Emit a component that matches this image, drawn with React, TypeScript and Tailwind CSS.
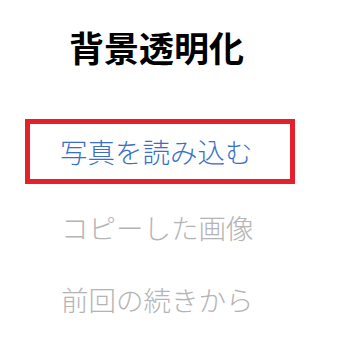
import React from "react";

export default function App() {
  const jp = { fontFamily: '"Noto Sans CJK JP", "Noto Sans", sans-serif' };
  return (
    <div className="w-[340px] h-[361px] bg-white overflow-hidden" style={jp}>
      <div className="pt-[23px] pl-[69px]">
        <h1 className="text-[35px] leading-[48px] font-bold text-black">背景透明化</h1>
      </div>
      <div className="pl-[25px] mt-[48px] flex flex-col">
        <div className="w-[270px] h-[65px] border-[5px] border-[#e3202b] flex items-center pl-[30px]">
          <span className="text-[27.5px] leading-none font-light text-[#3b6fc6]">写真を読み込む</span>
        </div>
        <div className="pl-[36px] mt-[23px] text-[27.5px] leading-[40px] font-light text-[#b4b4b4]">コピーした画像</div>
        <div className="pl-[36px] mt-[32px] text-[27.5px] leading-[40px] font-light text-[#b4b4b4]">前回の続きから</div>
      </div>
    </div>
  );
}
